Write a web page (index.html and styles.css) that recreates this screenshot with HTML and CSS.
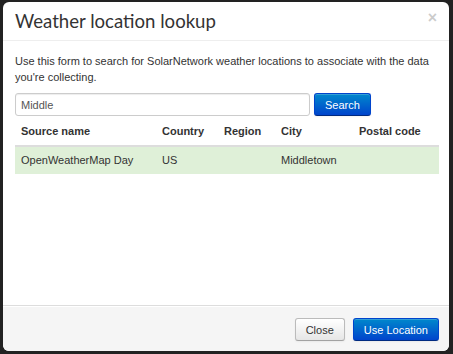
FILE: index.html
```html
<!doctype html>
<html lang="en">
    <head>
        <meta charset="UTF-8" />
        <title>Weather location lookup</title>
        <link rel="stylesheet" href="styles.css">
    </head>
    <body>
        <div class="modal">
            <div class="modal-header">
                <button class="close" type="button">&times;</button>
                <h3>Weather location lookup</h3>
            </div>
            <div class="modal-body">
                <p>Use this form to search for SolarNetwork weather locations to associate with the data you're collecting.</p>
                <form class="search-form">
                    <input type="text" class="search-input" value="Middle" />
                    <button type="button" class="btn btn-primary">Search</button>
                </form>
                <table class="results">
                    <colgroup>
                        <col class="col-source" />
                        <col class="col-country" />
                        <col class="col-region" />
                        <col class="col-city" />
                        <col />
                    </colgroup>
                    <thead>
                        <tr>
                            <th>Source name</th>
                            <th>Country</th>
                            <th>Region</th>
                            <th>City</th>
                            <th>Postal code</th>
                        </tr>
                    </thead>
                    <tbody>
                        <tr class="success">
                            <td>OpenWeatherMap Day</td>
                            <td>US</td>
                            <td></td>
                            <td>Middletown</td>
                            <td></td>
                        </tr>
                    </tbody>
                </table>
            </div>
            <div class="modal-footer">
                <button type="button" class="btn">Close</button>
                <button type="button" class="btn btn-primary">Use Location</button>
            </div>
        </div>
    </body>
</html>
```
FILE: styles.css
```css
html,
body {
    height: 100%;
}
body {
    margin: 0;
    padding: 2px 4px 3px 3px;
    box-sizing: border-box;
    background-color: #222;
    font-family: "Liberation Sans", Arial, sans-serif;
    font-size: 11px;
    line-height: 16px;
    color: #333;
}
.modal {
    height: 100%;
    display: flex;
    flex-direction: column;
    background-color: #fff;
    border-radius: 6px;
    overflow: hidden;
}
.modal-header {
    padding: 7px 12px;
    border-bottom: 1px solid #eee;
}
.modal-header h3 {
    margin: 0;
    font-family: Lato, sans-serif;
    font-weight: normal;
    font-size: 18.6px;
    line-height: 24px;
    color: #333;
}
.close {
    float: right;
    margin-top: 1px;
    padding: 0;
    border: 0;
    background: none;
    font-family: "Liberation Sans", Arial, sans-serif;
    font-size: 16px;
    font-weight: bold;
    line-height: 16px;
    color: #000;
    opacity: 0.2;
}
.modal-body {
    flex: 1;
    padding: 12px 10px 12px 12px;
}
.modal-body p {
    margin: 0 0 8px;
}
.search-form {
    display: flex;
    gap: 4px;
    margin-bottom: 1px;
}
.search-input {
    width: 295px;
    height: 23px;
    box-sizing: border-box;
    padding: 3px 5px;
    border: 1px solid #ccc;
    border-radius: 3px;
    font-family: "Liberation Sans", Arial, sans-serif;
    font-size: 11px;
    color: #555;
    box-shadow: inset 0 1px 1px rgba(0, 0, 0, 0.075);
}
.btn {
    height: 23px;
    padding: 0 10px;
    border: 1px solid #bbb;
    border-bottom-color: #a2a2a2;
    border-radius: 3px;
    font-family: "Liberation Sans", Arial, sans-serif;
    font-size: 11px;
    color: #333;
    background-image: linear-gradient(#fff, #e6e6e6);
    box-shadow: inset 0 1px 0 rgba(255, 255, 255, 0.2), 0 1px 2px rgba(0, 0, 0, 0.05);
}
.btn-primary {
    color: #fff;
    border-color: #04c #04c #002a80;
    background-image: linear-gradient(#08c, #04c);
}
.results {
    width: 100%;
    table-layout: fixed;
    border-collapse: collapse;
}
.results th,
.results td {
    padding: 6px;
    text-align: left;
    line-height: 16px;
    white-space: nowrap;
}
.results th {
    font-weight: bold;
    border-bottom: 2px solid #ddd;
}
.results td {
    padding: 5px 6px 6px;
}
.results .success td {
    background-color: #dff0d8;
}
.col-source {
    width: 141px;
}
.col-country {
    width: 62px;
}
.col-region {
    width: 57px;
}
.col-city {
    width: 78px;
}
.modal-footer {
    padding: 12px 10px 10px;
    display: flex;
    justify-content: flex-end;
    gap: 8px;
    background-color: #f5f5f5;
    border-top: 1px solid #ddd;
    box-shadow: inset 0 1px 0 #fff;
}
```
